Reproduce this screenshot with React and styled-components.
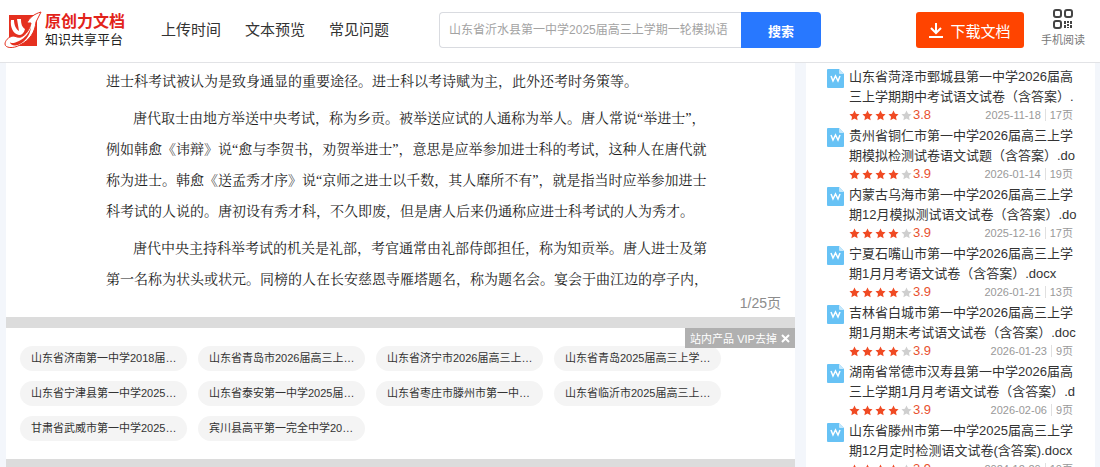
import React from "react";
import styled, { createGlobalStyle } from "styled-components";

const sans = `"Liberation Sans", "Noto Sans CJK SC", sans-serif`;

const GlobalStyle = createGlobalStyle`
  * { box-sizing: border-box; }
  html, body, #root { height: 100%; }
  body {
    margin: 0;
    background: #f3f6fb;
    color: #333;
    font-family: ${sans};
    overflow: hidden;
  }
  p, h1, ul { margin: 0; padding: 0; }
  ul { list-style: none; }
  a { color: inherit; text-decoration: none; }
  button { border: 0; padding: 0; font-family: inherit; cursor: pointer; }
`;

const Page = styled.div`
  display: flex;
  flex-direction: column;
  height: 100vh;
  overflow: hidden;
`;

const Header = styled.header`
  display: flex;
  align-items: center;
  flex: none;
  height: 63px;
  padding: 0 15px 2px 4px;
  background: #fff;
  border-bottom: 1px solid #e2e3e6;
`;

const Logo = styled.a`
  display: flex;
  align-items: center;
  gap: 3px;
  width: 157px;
`;

const LogoWords = styled.span`
  display: flex;
  flex-direction: column;
  white-space: nowrap;
`;

const LogoName = styled.strong`
  color: #e2231a;
  font-size: 16px;
  line-height: 20px;
`;

const LogoTagline = styled.span`
  color: #222;
  font-size: 13px;
  line-height: 16px;
`;

const Nav = styled.nav`
  display: flex;
  gap: 24px;
  font-size: 15px;
  line-height: 20px;
  white-space: nowrap;
`;

const SearchForm = styled.form`
  display: flex;
  width: 382px;
  height: 36px;
  margin-left: 50px;
`;

const SearchInput = styled.input`
  flex: 1;
  min-width: 0;
  padding: 0 0 0 9px;
  border: 1px solid #d9dbe0;
  border-right: 0;
  border-radius: 4px 0 0 4px;
  background: #fff;
  font-family: inherit;
  font-size: 12px;
  outline: 0;
  &::placeholder { color: #a3a3a3; opacity: 1; }
`;

const SearchButton = styled.button`
  width: 80px;
  border-radius: 0 4px 4px 0;
  background: #2878ff;
  color: #fff;
  font-size: 13px;
  font-weight: 700;
`;

const Actions = styled.div`
  display: flex;
  align-items: center;
  gap: 17px;
  margin-left: auto;
`;

const DownloadButton = styled.button`
  display: flex;
  align-items: center;
  justify-content: center;
  gap: 7px;
  width: 108px;
  height: 36px;
  border-radius: 3px;
  background: #ff4400;
  color: #fff;
  font-size: 15px;
`;

const PhoneLink = styled.a`
  display: flex;
  flex-direction: column;
  align-items: center;
  gap: 3px;
  padding-bottom: 4px;
  color: #777;
  font-size: 11px;
  line-height: 16px;
  white-space: nowrap;
`;

const Body = styled.main`
  display: flex;
  gap: 11px;
  flex: 1;
  min-height: 0;
  padding: 0 5px 0 6px;
`;

const Viewer = styled.div`
  flex: 1;
  min-width: 0;
  overflow: hidden;
  background: #fff;
`;

const Sheet = styled.article`
  padding: 3px 14px 4px 100px;
  color: #222;
  font-family: "Liberation Serif", "Noto Serif CJK SC", "Noto Sans CJK SC", serif;
  font-size: 14px;
  line-height: 31px;
  white-space: nowrap;
`;

const Paragraph = styled.p`
  margin-bottom: 6px;
  text-indent: ${(p) => (p.$indent ? "27px" : "0")};
`;

const PageCount = styled.div`
  margin-top: -8px;
  color: #8c8c8c;
  font-family: ${sans};
  font-size: 14px;
  line-height: 20px;
  text-align: right;
`;

const Divider = styled.div`
  height: 11px;
  background: #dcdcdc;
`;

const Promo = styled.section`
  position: relative;
  padding: 18px 14px;
`;

const PromoClose = styled.button`
  position: absolute;
  top: 0;
  right: 0;
  display: flex;
  align-items: center;
  justify-content: center;
  gap: 4px;
  width: 110px;
  height: 20px;
  background: #b0b0b0;
  color: #fff;
  font-size: 11px;
  white-space: nowrap;
`;

const Chips = styled.ul`
  display: flex;
  flex-wrap: wrap;
  gap: 10px 11px;
  max-width: 720px;
`;

const Chip = styled.a`
  display: block;
  width: 167px;
  padding: 0 11px;
  border-radius: 13px;
  background: #f4f4f4;
  font-size: 11px;
  line-height: 25px;
  white-space: nowrap;
`;

const Sidebar = styled.aside`
  flex: none;
  width: 289px;
  padding: 4px 22px 0 21px;
  overflow: hidden;
  background: #fff;
`;

const DocItem = styled.li`
  display: flex;
  gap: 5px;
`;

const DocIcon = styled.svg`
  flex: none;
  margin-top: 2px;
`;

const DocInfo = styled.div`
  flex: 1;
  min-width: 0;
`;

const DocTitle = styled.a`
  display: block;
  font-size: 13px;
  line-height: 20px;
  white-space: pre;
`;

const DocMeta = styled.div`
  display: flex;
  align-items: center;
  height: 19px;
  padding-bottom: 3px;
  color: #999;
  font-size: 11px;
  line-height: 12px;
`;

const Stars = styled.span`
  display: flex;
  gap: 2px;
`;

const Score = styled.span`
  margin-left: 1px;
  color: #e8512f;
  font-size: 13px;
`;

const DocDate = styled.span`
  margin-left: auto;
  padding-right: 4px;
  border-right: 1px solid #e0e0e0;
`;

const DocPages = styled.span`
  height: 12px;
  padding-left: 4px;
`;

const paragraphs = [
  {
    indent: false,
    lines: ["进士科考试被认为是致身通显的重要途径。进士科以考诗赋为主，此外还考时务策等。"],
  },
  {
    indent: true,
    lines: [
      "唐代取士由地方举送中央考试，称为乡贡。被举送应试的人通称为举人。唐人常说“举进士”，",
      "例如韩愈《讳辩》说“愈与李贺书，劝贺举进士”，意思是应举参加进士科的考试，这种人在唐代就",
      "称为进士。韩愈《送孟秀才序》说“京师之进士以千数，其人靡所不有”，就是指当时应举参加进士",
      "科考试的人说的。唐初设有秀才科，不久即废，但是唐人后来仍通称应进士科考试的人为秀才。",
    ],
  },
  {
    indent: true,
    lines: [
      "唐代中央主持科举考试的机关是礼部，考官通常由礼部侍郎担任，称为知贡举。唐人进士及第",
      "第一名称为状头或状元。同榜的人在长安慈恩寺雁塔题名，称为题名会。宴会于曲江边的亭子内，",
    ],
  },
];

const chips = [
  "山东省济南第一中学2018届…",
  "山东省青岛市2026届高三上…",
  "山东省济宁市2026届高三上…",
  "山东省青岛2025届高三上学…",
  "山东省宁津县第一中学2025…",
  "山东省泰安第一中学2025届…",
  "山东省枣庄市滕州市第一中…",
  "山东省临沂市2025届高三上…",
  "甘肃省武威市第一中学2025…",
  "宾川县高平第一完全中学20…",
];

const docs = [
  ["山东省菏泽市鄄城县第一中学2026届高\n三上学期期中考试语文试卷（含答案）.", "3.8", "2025-11-18", "17页"],
  ["贵州省铜仁市第一中学2026届高三上学\n期模拟检测试卷语文试题（含答案）.do", "3.9", "2026-01-14", "19页"],
  ["内蒙古乌海市第一中学2026届高三上学\n期12月模拟测试语文试卷（含答案）.do", "3.9", "2025-12-16", "17页"],
  ["宁夏石嘴山市第一中学2026届高三上学\n期1月月考语文试卷（含答案）.docx", "3.9", "2026-01-21", "13页"],
  ["吉林省白城市第一中学2026届高三上学\n期1月期末考试语文试卷（含答案）.doc", "3.9", "2026-01-23", "9页"],
  ["湖南省常德市汉寿县第一中学2026届高\n三上学期1月月考语文试卷（含答案）.d", "3.9", "2026-02-06", "9页"],
  ["山东省滕州市第一中学2025届高三上学\n期12月定时检测语文试卷(含答案).docx", "3.9", "2024-12-20", "10页"],
];

function LogoMark() {
  return (
    <svg width="38" height="38" viewBox="0 0 38 38" aria-hidden="true">
      <path d="M5 4h28v31H5z" fill="#e5301f" />
      <path
        d="M37 1C30 3 25 7 23 12h4c-1 6-5 12-10 14-4 1-5-1-8-1-5 1-8 5-8 8 0 4 8 5 15 1C26 29 31 21 32 11z"
        fill="#fff"
        stroke="#e5301f"
        strokeWidth="1"
      />
      <path d="M7 9h3c0 5 2 9 5 11l-2-12h4c0 5 1 8 4 10-1 4-3 6-6 6C9 23 6 16 7 9z" fill="#fff" />
      <path d="M6 31c1 2 5 1 9-1 6-3 10-8 12-14-1 9-6 15-13 18-4 1-8 0-8-3z" fill="#e5301f" />
    </svg>
  );
}

function DownloadIcon() {
  return (
    <svg width="14" height="16" viewBox="0 0 14 16" fill="none" stroke="#fff" strokeWidth="2" aria-hidden="true">
      <path d="M7 1v10M2 6l5 5 5-5M0 15h14" />
    </svg>
  );
}

function QrIcon() {
  return (
    <svg width="20" height="20" viewBox="0 0 20 20" aria-hidden="true">
      <g fill="none" stroke="#444" strokeWidth="2">
        <rect x="1" y="1" width="7" height="7" rx="2" />
        <rect x="12" y="1" width="7" height="7" rx="2" />
        <rect x="1" y="12" width="7" height="7" rx="2" />
      </g>
      <path d="M11 12h2v3h-2zM14 12h2v2h-2zM17 12h2v3h-2zM14 15h2v2h-2zM11 16h2v3h-2zM17 16h2v3h-2zM14 18h2v1h-2z" fill="#444" />
    </svg>
  );
}

function WordIcon() {
  return (
    <DocIcon width="17" height="19" viewBox="0 0 17 19" aria-hidden="true">
      <path d="M1 0h11l5 5v13a1 1 0 0 1-1 1H1a1 1 0 0 1-1-1V1a1 1 0 0 1 1-1z" fill="#67c2f5" />
      <path d="M12 0l5 5h-4a1 1 0 0 1-1-1z" fill="#c5e8fc" />
      <path d="M4 7l2 5 2.500-5 2.500 5 2-5" fill="none" stroke="#fff" strokeWidth="1.500" />
    </DocIcon>
  );
}

function Star({ on }) {
  return (
    <svg width="11" height="11" viewBox="0 0 24 24" aria-hidden="true">
      <path
        d="M12 1l3.400 7.200 7.600 1-5.600 5.400 1.400 7.900L12 18.700l-6.800 3.800 1.400-7.900L1 9.200l7.600-1z"
        fill={on ? "#f04a23" : "#cfcfcf"}
      />
    </svg>
  );
}

function DocRow({ doc }) {
  const [title, score, date, pages] = doc;
  return (
    <DocItem>
      <WordIcon />
      <DocInfo>
        <DocTitle href="#">{title}</DocTitle>
        <DocMeta>
          <Stars>
            {[1, 2, 3, 4, 5].map((n) => (
              <Star key={n} on={n < 5} />
            ))}
          </Stars>
          <Score>{score}</Score>
          <DocDate>{date}</DocDate>
          <DocPages>{pages}</DocPages>
        </DocMeta>
      </DocInfo>
    </DocItem>
  );
}

export default function App() {
  return (
    <Page lang="zh-CN">
      <GlobalStyle />
      <Header>
        <Logo href="#">
          <LogoMark />
          <LogoWords>
            <LogoName>原创力文档</LogoName>
            <LogoTagline>知识共享平台</LogoTagline>
          </LogoWords>
        </Logo>
        <Nav>
          <a href="#">上传时间</a>
          <a href="#">文本预览</a>
          <a href="#">常见问题</a>
        </Nav>
        <SearchForm>
          <SearchInput aria-label="搜索文档" placeholder="山东省沂水县第一中学2025届高三上学期一轮模拟语" />
          <SearchButton type="button">搜索</SearchButton>
        </SearchForm>
        <Actions>
          <DownloadButton type="button">
            <DownloadIcon />
            下载文档
          </DownloadButton>
          <PhoneLink href="#">
            <QrIcon />
            手机阅读
          </PhoneLink>
        </Actions>
      </Header>
      <Body>
        <Viewer>
          <Sheet>
            {paragraphs.map((p, i) => (
              <Paragraph key={i} $indent={p.indent}>
                {p.lines.map((line, n) => (
                  <React.Fragment key={n}>
                    {n > 0 && <br />}
                    {line}
                  </React.Fragment>
                ))}
              </Paragraph>
            ))}
            <PageCount>1/25页</PageCount>
          </Sheet>
          <Divider />
          <Promo>
            <Chips>
              {chips.map((c) => (
                <li key={c}>
                  <Chip href="#">{c}</Chip>
                </li>
              ))}
            </Chips>
            <PromoClose type="button">
              站内产品 VIP去掉
              <svg width="9" height="9" viewBox="0 0 9 9" stroke="#fff" strokeWidth="2" aria-hidden="true">
                <path d="M1 1l7 7M8 1L1 8" />
              </svg>
            </PromoClose>
          </Promo>
          <Divider />
        </Viewer>
        <Sidebar>
          <ul>
            {docs.map((d) => (
              <DocRow key={d[0]} doc={d} />
            ))}
          </ul>
        </Sidebar>
      </Body>
    </Page>
  );
}
